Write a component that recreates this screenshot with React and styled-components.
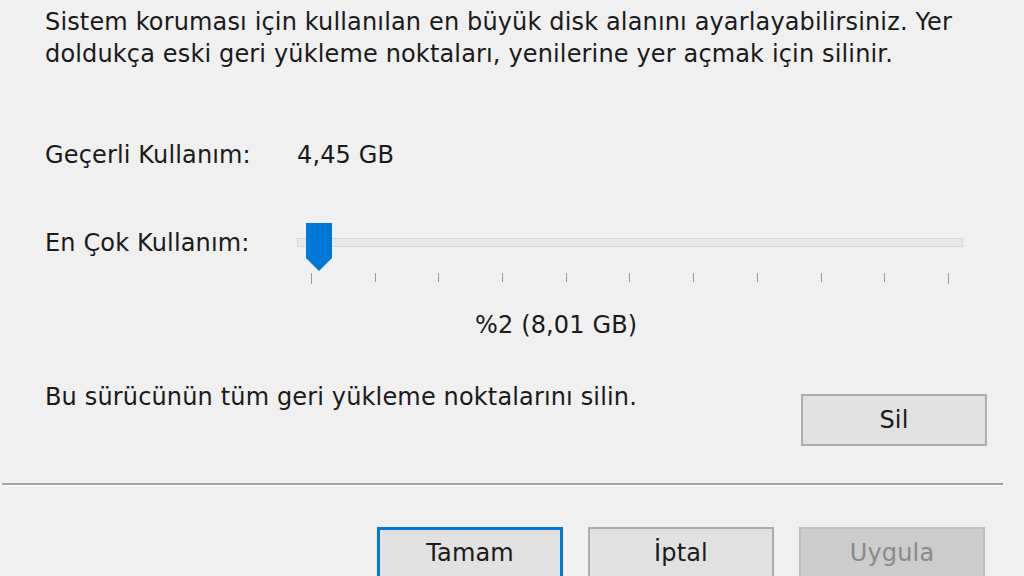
import React from "react";
import styled, { createGlobalStyle } from "styled-components";

const Global = createGlobalStyle`
  html, body {
    margin: 0;
    padding: 0;
    background: #f0f0f0;
  }
  body {
    font-family: "DejaVu Sans", sans-serif;
    color: #1a1a1a;
  }
`;

const Dialog = styled.div`
  width: 1024px;
  height: 576px;
  overflow: hidden;
  background: #f0f0f0;
  font-size: 24px;
  letter-spacing: 0.15px;
`;

const Section = styled.div`
  padding: 0 37px 0 45px;
`;

const Description = styled.p`
  margin: 0;
  padding-top: 6px;
  line-height: 32px;
`;

const Row = styled.div`
  display: flex;
  align-items: ${(p) => p.$align || "center"};
  margin-top: ${(p) => p.$top || 0}px;
`;

const Label = styled.div`
  width: 252px;
  flex: none;
  line-height: 28px;
  margin-top: ${(p) => p.$top || 0}px;
`;

const Value = styled.div`
  line-height: 28px;
`;

const SliderWrap = styled.div`
  position: relative;
  width: 666px;
  height: 62px;
`;

const Track = styled.div`
  position: absolute;
  left: 0;
  right: 0;
  top: 16px;
  height: 7px;
  background: #e7eaea;
  border: 1px solid #d6d9d9;
`;

const Thumb = styled.svg`
  position: absolute;
  left: 8px;
  top: 0;
`;

const Ticks = styled.div`
  position: absolute;
  left: 14px;
  right: 14px;
  top: 51px;
  display: flex;
  justify-content: space-between;
`;

const Tick = styled.span`
  width: 1px;
  height: ${(p) => (p.$long ? 11 : 9)}px;
  background: #9a9a9a;
`;

const Percent = styled.div`
  margin: 27px 0 0 430px;
  line-height: 28px;
`;

const Text = styled.div`
  line-height: 28px;
`;

const Button = styled.button`
  width: 186px;
  height: 52px;
  flex: none;
  box-sizing: border-box;
  font-family: inherit;
  font-size: 24px;
  letter-spacing: inherit;
  color: ${(p) => (p.disabled ? "#8a8a8a" : "#1a1a1a")};
  background: ${(p) => (p.disabled ? "#cccccc" : "#e1e1e1")};
  border: ${(p) =>
    p.$primary ? "3px solid #0078d7" : p.disabled ? "2px solid #bfbfbf" : "2px solid #adadad"};
  padding: 0;
  margin: 0;
`;

const SideButton = styled(Button)`
  margin-left: auto;
  margin-top: 11px;
`;

const Separator = styled.div`
  margin: ${(p) => p.$top}px 0 0 2px;
  width: 1001px;
  height: 2px;
  background: #a3a3a3;
  box-shadow: 0 1px 0 #ffffff;
`;

const Footer = styled.div`
  display: flex;
  gap: 25px;
  padding-left: 377px;
  margin-top: 42px;
`;

const TICKS = Array.from({ length: 11 });

export default function App() {
  return (
    <Dialog>
      <Global />
      <Section>
        <Description>
          Sistem koruması için kullanılan en büyük disk alanını ayarlayabilirsiniz. Yer
          <br />
          doldukça eski geri yükleme noktaları, yenilerine yer açmak için silinir.
        </Description>
        <Row $top={71}>
          <Label>Geçerli Kullanım:</Label>
          <Value>4,45 GB</Value>
        </Row>
        <Row $top={53} $align="flex-start">
          <Label $top={7}>En Çok Kullanım:</Label>
          <SliderWrap>
            <Track />
            <Thumb width="28" height="50" viewBox="0 0 28 50">
              <path d="M1 1 H27 V36 L14 49 L1 36 Z" fill="#0078d7" />
            </Thumb>
            <Ticks>
              {TICKS.map((_, i) => (
                <Tick key={i} $long={i === 0 || i === TICKS.length - 1} />
              ))}
            </Ticks>
          </SliderWrap>
        </Row>
        <Percent>%2 (8,01 GB)</Percent>
        <Row $top={44} $align="flex-start">
          <Text>Bu sürücünün tüm geri yükleme noktalarını silin.</Text>
          <SideButton>Sil</SideButton>
        </Row>
      </Section>
      <Separator $top={37} />
      <Footer>
        <Button $primary>Tamam</Button>
        <Button>İptal</Button>
        <Button disabled>Uygula</Button>
      </Footer>
    </Dialog>
  );
}
